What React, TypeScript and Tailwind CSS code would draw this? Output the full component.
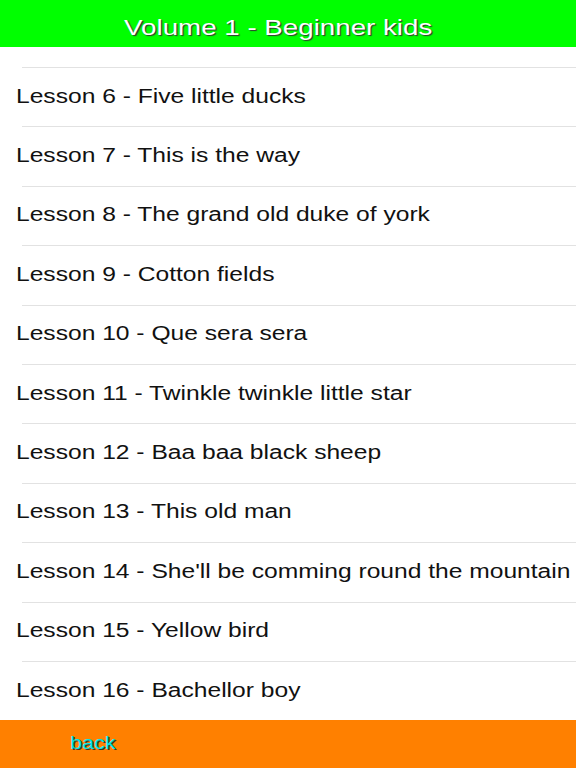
const lessons = [
  'Lesson 6 - Five little ducks',
  'Lesson 7 - This is the way',
  'Lesson 8 - The grand old duke of york',
  'Lesson 9 - Cotton fields',
  'Lesson 10 - Que sera sera',
  'Lesson 11 - Twinkle twinkle little star',
  'Lesson 12 - Baa baa black sheep',
  'Lesson 13 - This old man',
  "Lesson 14 - She'll be comming round the mountain",
  'Lesson 15 - Yellow bird',
  'Lesson 16 - Bachellor boy',
]

export default function App() {
  return (
    <div
      className="flex h-screen w-full flex-col overflow-hidden bg-white"
      style={{ fontFamily: '"Liberation Sans", Arial, sans-serif' }}
    >
      {/* Header */}
      <header className="flex h-[47px] shrink-0 items-center justify-center bg-[#00ff00] pt-[7px]">
        <h1 className="inline-block origin-center scale-x-[1.26] pr-[16px] text-[22px] text-white [text-shadow:1px_1px_1px_#333]">
          Volume 1 - Beginner kids
        </h1>
      </header>

      {/* List */}
      <main className="flex-1 overflow-hidden">
        <div className="h-[20px]"></div>
        {lessons.map((title) => (
          <div key={title} className="relative h-[59.4px]">
            <div className="absolute left-[22px] right-0 top-0 h-px bg-[#e2e2e2]"></div>
            <div className="flex h-full items-center whitespace-nowrap pb-[2px] pl-[16px]">
              <span className="inline-block origin-left scale-x-[1.23] text-[20px] text-[#111]">
                {title}
              </span>
            </div>
          </div>
        ))}
      </main>

      {/* Footer */}
      <footer className="flex h-[48px] shrink-0 items-center bg-[#ff8000]">
        <button className="ml-[70px] inline-block origin-left scale-x-[1.2] pb-[1px] text-[18px] text-[#00e8e8] [text-shadow:1px_1px_0_#333]">
          back
        </button>
      </footer>
    </div>
  )
}
